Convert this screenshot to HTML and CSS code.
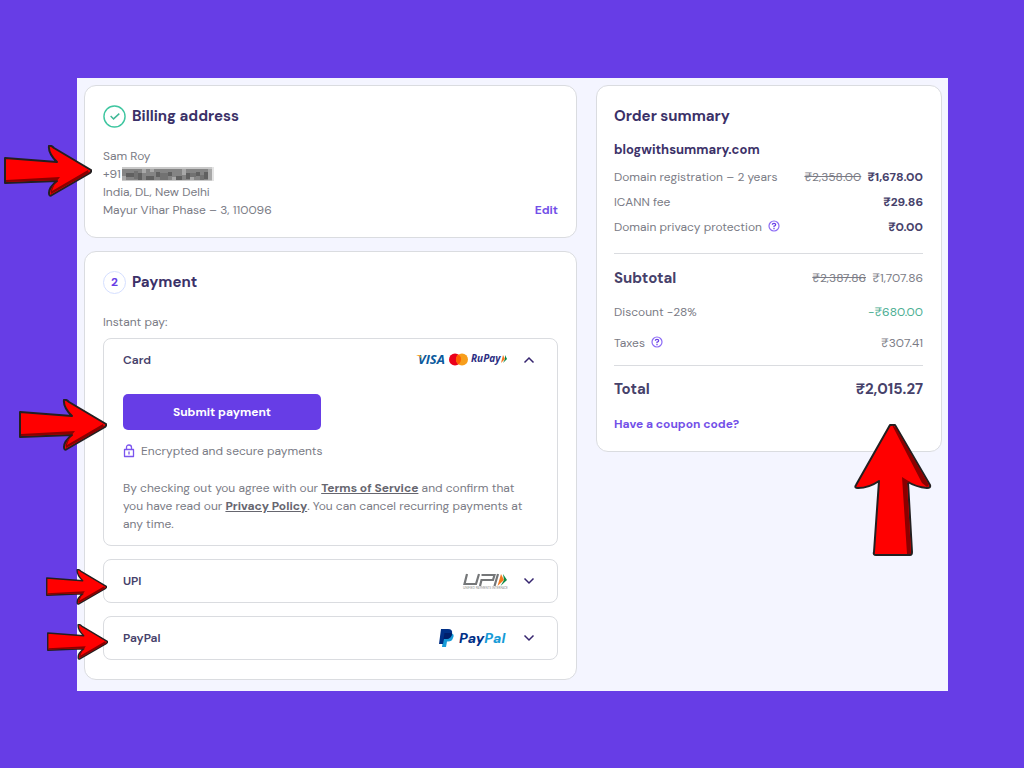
FILE: index.html
```html
<!DOCTYPE html>
<html lang="en">
<head>
    <meta charset="utf-8">
    <meta name="viewport" content="width=device-width, initial-scale=1">
    <title>Checkout</title>
    <link rel="stylesheet" href="styles.css">
</head>
<body>
    <svg class="defs" width="0" height="0" aria-hidden="true">
        <symbol id="arrow-right" viewBox="0 0 88 52">
            <path fill="#f00" stroke="#231f20" stroke-width="2" stroke-linejoin="round" d="M1 13L53 17Q44 8 45 1Q47 0 50 3L87 25Q88 26 86 28L48 50Q45 52 45 48Q45 42 53 36L1 38Z"/>
            <path fill="#8b0000" d="M2 35L56 32Q50 39 48 46L84 25L85 28L47 49Q45 44 54 35L2 37Z"/>
        </symbol>
        <symbol id="help" viewBox="0 0 12 12">
            <circle cx="6" cy="6" r="5" fill="none" stroke="#8c6bf5" stroke-width="1.2"/>
            <path fill="none" stroke="#673de6" stroke-width="1.2" d="M4.3 4.8Q4.3 3.3 6 3.3T7.7 4.8Q7.7 5.8 6 6.2V7.2M6 8V9.2"/>
        </symbol>
        <symbol id="chevron" viewBox="0 0 12 8">
            <path fill="none" stroke="#36256f" stroke-width="1.5" d="M1.5 1.5L6 6L10.5 1.5"/>
        </symbol>
    </svg>

    <main class="checkout">
        <div class="steps">
            <section class="card billing">
                <h2 class="card-title">
                    <svg class="step" viewBox="0 0 24 24" aria-hidden="true">
                        <circle cx="12" cy="12" r="11" fill="none" stroke="#3fc6a0" stroke-width="1.5"/>
                        <path fill="none" stroke="#3fb896" stroke-width="1.5" d="M8 11.5L11 14.5L17 9"/>
                    </svg>
                    Billing address
                </h2>
                <div class="billing-row">
                    <address>
                        Sam Roy<br>
                        +91<svg class="redacted" viewBox="0 0 92 14" aria-label="hidden number" shape-rendering="crispEdges">
                            <path fill="#c9c9c9" d="M0 0H92V14H0Z"/>
                            <path fill="#848484" d="M0 2H88V13H0Z"/>
                            <path fill="#606060" d="M4 6H12V10H4ZM16 6H20V13H16ZM24 9H32V13H24ZM34 5H38V10H34ZM46 5H50V9H46ZM54 9H60V13H54ZM64 6H68V12H64ZM74 5H78V9H74ZM82 5H86V12H82Z"/>
                            <path fill="#727272" d="M12 4H16V12H12ZM38 6H46V13H38ZM68 6H74V10H68ZM78 8H82V13H78Z"/>
                            <path fill="#a8a8a8" d="M0 9H4V13H0ZM20 2H24V6H20ZM28 2H32V5H28ZM50 10H54V13H50ZM60 2H64V8H60ZM68 10H72V13H68ZM86 2H90V13H86Z"/>
                            <path fill="#e4e4e4" d="M90 0H92V14H90Z"/>
                        </svg><br>
                        India, DL, New Delhi<br>
                        Mayur Vihar Phase – 3, 110096
                    </address>
                    <a class="link" href="#">Edit</a>
                </div>
            </section>

            <section class="card payment">
                <h2 class="card-title"><span class="step step-number">2</span> Payment</h2>
                <p class="instant">Instant pay:</p>

                <div class="method">
                    <button class="method-head" type="button" aria-expanded="true">
                        <span>Card</span>
                        <svg class="brands" width="92" height="16" viewBox="0 0 92 16" aria-hidden="true">
                            <text class="visa" x="2" y="12">VISA</text>
                            <path fill="#f7a823" d="M0 3H4L6 7Q4 4 0 3Z"/>
                            <circle cx="39" cy="7.5" r="6" fill="#eb001b"/>
                            <circle cx="46" cy="7.5" r="6" fill="#f79e1b"/>
                            <path fill="#ff5f00" d="M42.500 2.600A6 6 0 0 1 42.500 12.400A6 6 0 0 1 42.500 2.600Z"/>
                            <text class="rupay" x="55" y="10">RuPay</text>
                            <path fill="#f47920" d="M87 3L89 7L85 11Z"/>
                            <path fill="#00864b" d="M89 3L91 7L87 11L89 7Z"/>
                        </svg>
                        <svg class="chevron up" aria-hidden="true"><use href="#chevron"/></svg>
                    </button>
                    <div class="method-body">
                        <button class="submit" type="button">Submit payment</button>
                        <p class="secure">
                            <svg width="12" height="14" viewBox="0 0 12 14" aria-hidden="true">
                                <path fill="none" stroke="#7b55ee" stroke-width="1.3" stroke-linejoin="round" d="M1.500 5.500H10.500V12.500H1.500ZM3.500 5.500V3.500Q3.500 1 6 1T8.500 3.500V5.500M6 7.500V10.500"/>
                            </svg>
                            Encrypted and secure payments
                        </p>
                        <p class="terms">By checking out you agree with our <a href="#">Terms of Service</a> and confirm that you have read our <a href="#">Privacy Policy</a>. You can cancel recurring payments at any time.</p>
                    </div>
                </div>

                <div class="method">
                    <button class="method-head" type="button" aria-expanded="false">
                        <span>UPI</span>
                        <svg class="brands" width="46" height="18" viewBox="0 0 46 18" aria-hidden="true">
                            <path fill="none" stroke="#757779" stroke-width="2.200" d="M5 2L2.500 12H14L17 2M18 14L19.500 8H31L32.500 3H19.500M36 2L32.500 14"/>
                            <path fill="#f47920" d="M39 2L42 8L35.500 14Z"/>
                            <path fill="#0e8a45" d="M41 2L45 8L38.500 14L42 8Z"/>
                            <text class="upi-caption" x="1" y="17">UNIFIED PAYMENTS INTERFACE</text>
                        </svg>
                        <svg class="chevron" aria-hidden="true"><use href="#chevron"/></svg>
                    </button>
                </div>

                <div class="method">
                    <button class="method-head" type="button" aria-expanded="false">
                        <span>PayPal</span>
                        <svg class="brands" width="70" height="20" viewBox="0 0 70 20" aria-hidden="true">
                            <path fill="#179bd7" d="M6 5H13Q17 6 15 10Q14 14 9 13.500L8 19H4Z"/>
                            <path fill="#003087" d="M3 1H10Q15 1 14 6Q13 11 8 11H6L5 16H1Z"/>
                            <path fill="#001f6b" d="M6.500 5H14Q14 10 9 11H5.500Z"/>
                            <text class="paypal" x="21" y="15">Pay<tspan class="pal">Pal</tspan></text>
                        </svg>
                        <svg class="chevron" aria-hidden="true"><use href="#chevron"/></svg>
                    </button>
                </div>
            </section>
        </div>

        <aside class="card summary">
            <h2>Order summary</h2>
            <h3>blogwithsummary.com</h3>
            <dl class="items">
                <div><dt>Domain registration – 2 years</dt><dd><s>₹2,358.00</s> <b>₹1,678.00</b></dd></div>
                <div><dt>ICANN fee</dt><dd><b>₹29.86</b></dd></div>
                <div><dt>Domain privacy protection <svg class="help"><use href="#help"/></svg></dt><dd><b>₹0.00</b></dd></div>
            </dl>
            <dl class="totals">
                <div class="subtotal"><dt>Subtotal</dt><dd><s>₹2,387.86</s> ₹1,707.86</dd></div>
                <div><dt>Discount -28%</dt><dd class="discount">-₹680.00</dd></div>
                <div><dt>Taxes <svg class="help"><use href="#help"/></svg></dt><dd>₹307.41</dd></div>
            </dl>
            <dl class="total">
                <div><dt>Total</dt><dd>₹2,015.27</dd></div>
            </dl>
            <a class="link" href="#">Have a coupon code?</a>
        </aside>

        <!-- Arrows pointing at each step -->
        <svg class="arrow arrow-billing" aria-hidden="true"><use href="#arrow-right"/></svg>
        <svg class="arrow arrow-card" aria-hidden="true"><use href="#arrow-right"/></svg>
        <svg class="arrow arrow-small arrow-upi" aria-hidden="true"><use href="#arrow-right"/></svg>
        <svg class="arrow arrow-small arrow-paypal" aria-hidden="true"><use href="#arrow-right"/></svg>
        <svg class="arrow arrow-total" viewBox="0 0 78 132" aria-hidden="true">
            <path fill="#f00" stroke="#231f20" stroke-width="2" stroke-linejoin="round" d="M36 1H41L76 61Q77 64 73 64Q62 63 54 58L58 128Q58 131 56 131H22Q19 131 20 128L25 57Q15 64 4 64Q0 64 2 61Z"/>
            <path fill="#8b0000" d="M38 1L42 4L75 61L73 63L68 59ZM48 53L56 58L53 59L57 130H53Z"/>
        </svg>
    </main>
</body>
</html>
```
FILE: styles.css
```css
* { box-sizing: border-box; }
body {
    margin: 0;
    padding: 78px 76px 77px 77px;
    background: #673de6;
    color: #7a7b85;
    font: 12px/18px "DM Sans", Inter, sans-serif;
}
h2, h3, p, dl, dd { margin: 0; }
h2, h3, b { color: #46416a; font-weight: 700; }
button { font: inherit; cursor: pointer; }
.defs { position: absolute; }

.checkout {
    position: relative;
    display: grid;
    grid-template-columns: minmax(0, 493fr) minmax(0, 346fr);
    gap: 19px;
    align-items: start;
    padding: 7px 6px 11px 7px;
    background: #f4f5ff;
}
.steps { display: grid; gap: 13px; }
.card {
    padding: 18px;
    background: white;
    border: 1px solid #dadce0;
    border-radius: 12px;
}
h2 { font-size: 15px; line-height: 24px; color: #3b3168; }
.card-title { display: flex; align-items: center; gap: 6px; }
.step { width: 23px; height: 23px; }
.step-number {
    border: 1px solid #d5dfff;
    border-radius: 50%;
    color: #673de6;
    font-size: 12px;
    line-height: 21px;
    text-align: center;
}
.link { color: #7350e8; font-weight: 700; text-decoration: none; }

.billing-row {
    display: flex;
    justify-content: space-between;
    align-items: flex-end;
    margin-top: 19px;
}
address { font-style: normal; }
.redacted { width: 92px; height: 14px; margin-left: 1px; vertical-align: -3px; }

.payment { padding-bottom: 19px; }
.instant { margin: 19px 0 7px; }
.method {
    border: 1px solid #dadce0;
    border-radius: 8px;
}
.method + .method { margin-top: 13px; }
.method-head {
    display: flex;
    align-items: center;
    width: 100%;
    height: 42px;
    padding: 0 22px 0 19px;
    background: none;
    border: none;
    color: #46416a;
    font-weight: 600;
}
.brands { margin-left: auto; margin-right: 15px; overflow: visible; }
.chevron { width: 12px; height: 8px; }
.up { transform: rotate(180deg); }
.method-body { padding: 13px 25px 12px 19px; }
.submit {
    display: block;
    width: 198px;
    height: 36px;
    background: #673de6;
    border: none;
    border-radius: 5px;
    color: white;
    font-weight: 700;
}
.secure { display: flex; align-items: center; gap: 6px; margin: 12px 0 19px; }
.terms a { color: #66666f; font-weight: 700; }

.visa, .rupay { font-family: "Open Sans", sans-serif; font-style: italic; font-weight: 700; }
.visa { fill: #0b5a9d; font-size: 13px; }
.rupay { fill: #2c2e83; font-size: 10px; }
.paypal { fill: #003087; font: italic 800 14px "DM Sans", sans-serif; }
.pal { fill: #179bd7; }
.upi-caption { fill: #8a8a8a; font: 3px Lato, sans-serif; }

.summary { padding-left: 17px; }
.summary h3 { margin: 11px 0 7px; font-size: 13px; line-height: 22px; color: #3b3168; }
.summary dl div { display: flex; justify-content: space-between; align-items: center; }
.summary s { margin-right: 3px; }
.items { display: grid; gap: 7px; padding-bottom: 17px; }
.totals {
    display: grid;
    gap: 13px;
    padding: 12px 0 13px;
    border-top: 1px solid #dadce0;
}
.subtotal { line-height: 24px; }
.subtotal dt, .total { color: #46416a; font-size: 15px; font-weight: 700; }
.discount { color: #49ad91; }
.total { padding: 14px 0 17px; border-top: 1px solid #dadce0; }
.help { width: 12px; height: 12px; margin-left: 3px; vertical-align: -1px; }

.arrow { position: absolute; width: 88px; height: 52px; }
.arrow-small { width: 61px; height: 36px; }
.arrow-billing { left: -73px; top: 67px; }
.arrow-card { left: -58px; top: 321px; }
.arrow-upi { left: -31px; top: 491px; }
.arrow-paypal { left: -30px; top: 546px; }
.arrow-total { right: 16px; top: 346px; width: 78px; height: 132px; }
```
